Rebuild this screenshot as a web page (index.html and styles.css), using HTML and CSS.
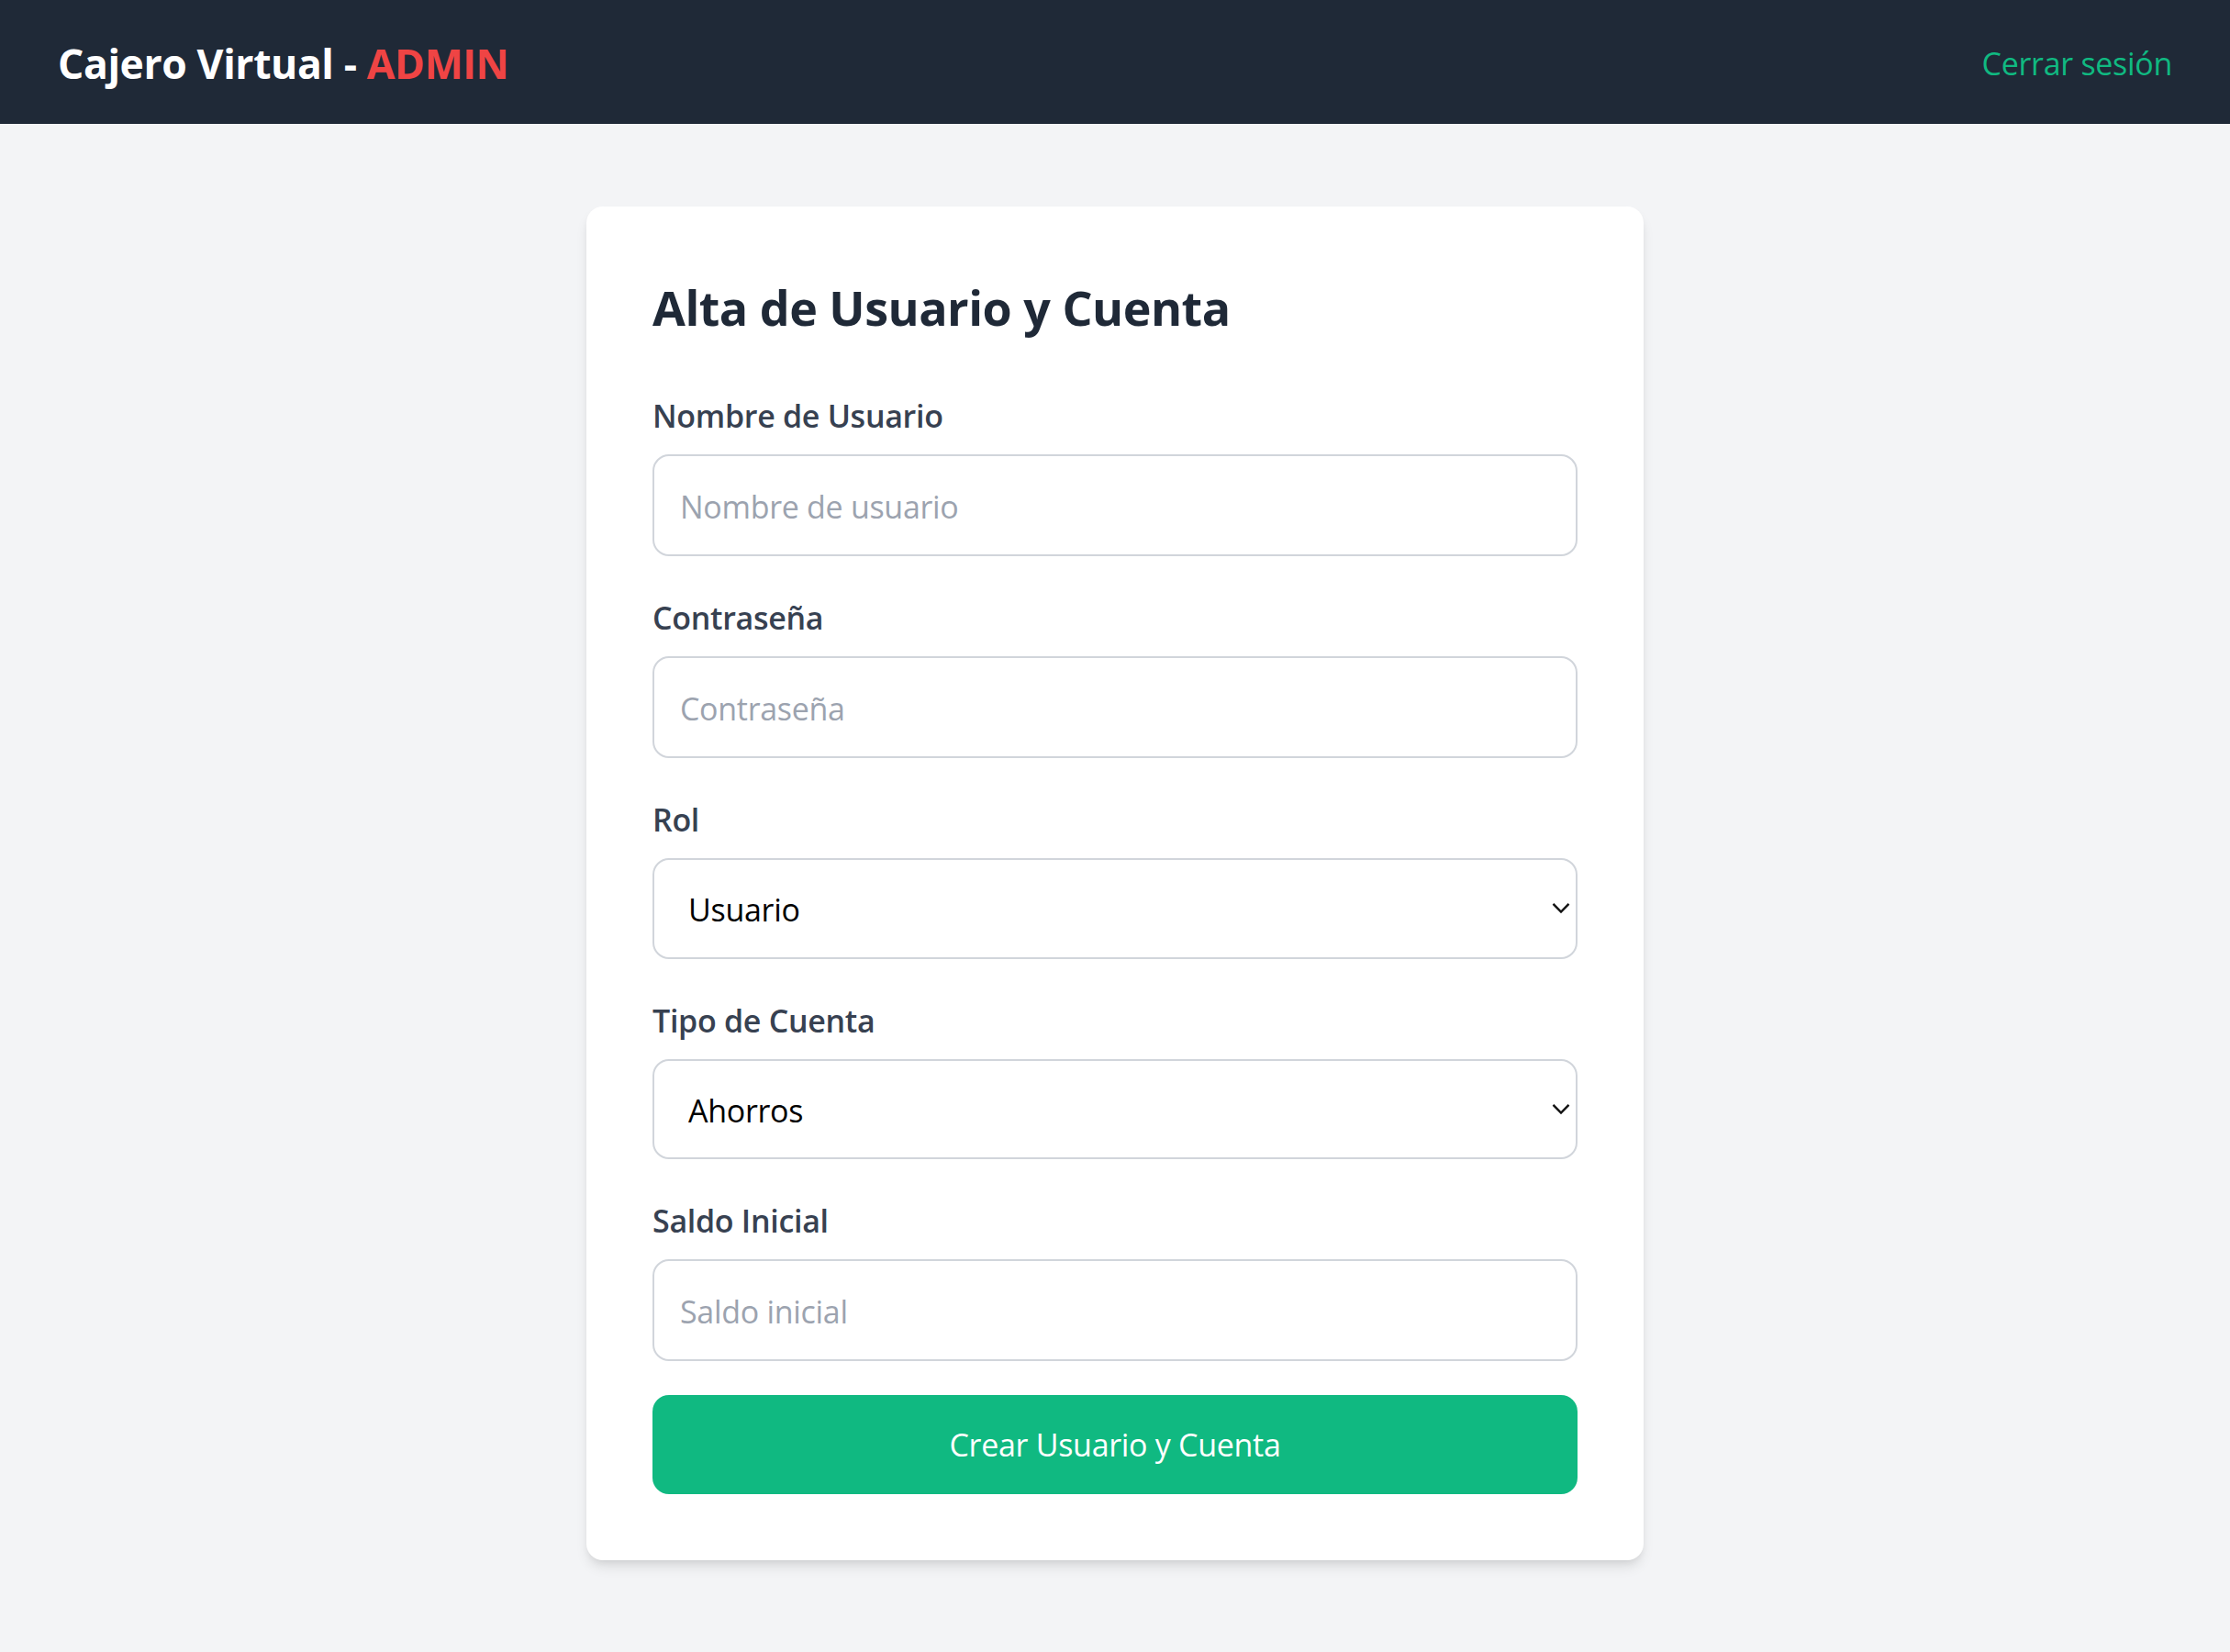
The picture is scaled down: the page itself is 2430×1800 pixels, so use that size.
FILE: index.html
```html
<!DOCTYPE html>
<html lang="es">
<head>
<meta charset="utf-8">
<title>Cajero Virtual - ADMIN</title>
<link rel="stylesheet" href="styles.css">
</head>
<body>
<header class="topbar">
  <h1 class="brand">Cajero Virtual - <span class="brand-admin">ADMIN</span></h1>
  <a class="logout" href="#">Cerrar sesión</a>
</header>
<main class="page">
  <form class="card">
    <h2 class="card-title">Alta de Usuario y Cuenta</h2>
    <div class="field">
      <label class="label">Nombre de Usuario</label>
      <input class="control" type="text" placeholder="Nombre de usuario">
    </div>
    <div class="field">
      <label class="label">Contraseña</label>
      <input class="control" type="password" placeholder="Contraseña">
    </div>
    <div class="field">
      <label class="label">Rol</label>
      <div class="select-wrap">
        <select class="control select">
          <option>Usuario</option>
          <option>Administrador</option>
        </select>
        <svg class="chevron" width="20" height="13" viewBox="0 0 20 13"><path d="M1.5 1.8 L10 10.5 L18.5 1.8" fill="none" stroke="#111" stroke-width="2.4"/></svg>
      </div>
    </div>
    <div class="field">
      <label class="label">Tipo de Cuenta</label>
      <div class="select-wrap">
        <select class="control select">
          <option>Ahorros</option>
          <option>Corriente</option>
        </select>
        <svg class="chevron" width="20" height="13" viewBox="0 0 20 13"><path d="M1.5 1.8 L10 10.5 L18.5 1.8" fill="none" stroke="#111" stroke-width="2.4"/></svg>
      </div>
    </div>
    <div class="field">
      <label class="label">Saldo Inicial</label>
      <input class="control" type="number" placeholder="Saldo inicial">
    </div>
    <button class="submit" type="button">Crear Usuario y Cuenta</button>
  </form>
</main>
</body>
</html>
```

FILE: styles.css
```css
* { box-sizing: border-box; }
html, body { margin: 0; padding: 0; }
body {
  background: #f3f4f6;
  font-family: "Open Sans", "Noto Sans", "Liberation Sans", sans-serif;
  color: #1f2937;
  min-height: 1800px;
}
.topbar {
  height: 135px;
  background: #1f2937;
  display: flex;
  align-items: center;
  justify-content: space-between;
  padding: 0 63px;
}
.brand {
  margin: 0;
  font-size: 44.5px;
  line-height: 63px;
  font-weight: 700;
  color: #ffffff;
  letter-spacing: -0.4px;
  padding-top: 2px;
}
.brand-admin { color: #ef4444; }
.logout {
  color: #10b981;
  font-size: 34px;
  text-decoration: none;
  letter-spacing: -0.3px;
  padding-top: 3px;
}
.page {
  display: flex;
  justify-content: center;
  padding-top: 90px;
}
.card {
  width: 1152px;
  background: #ffffff;
  border-radius: 18px;
  padding: 72px;
  box-shadow: 0 9px 14px -2px rgba(0,0,0,0.1), 0 4px 9px -4px rgba(0,0,0,0.1);
  display: flex;
  flex-direction: column;
}
.card-title {
  margin: 0 0 54px;
  padding-top: 2px;
  height: 72px;
  font-size: 52px;
  line-height: 72px;
  font-weight: 700;
  color: #1f2937;
  letter-spacing: -0.5px;
}
.field {
  display: flex;
  flex-direction: column;
  margin-bottom: 37px;
}
.label {
  font-size: 34px;
  line-height: 54px;
  height: 54px;
  padding-top: 3px;
  font-weight: 600;
  color: #374151;
  margin-bottom: 18px;
  letter-spacing: -0.3px;
}
.control {
  width: 100%;
  height: 111px;
  border: 2px solid #d1d5db;
  border-radius: 18px;
  padding: 3px 28px 0;
  font-family: inherit;
  font-size: 34px;
  color: #111827;
  background: #ffffff;
  outline: none;
  letter-spacing: -0.3px;
}
.control::placeholder { color: #9ca3af; }
.select-wrap { position: relative; }
.select {
  appearance: none;
  -webkit-appearance: none;
  height: 109.5px;
  padding-left: 37px;
  color: #000000;
}
.chevron {
  position: absolute;
  right: 8px;
  top: 48px;
  pointer-events: none;
}
.submit {
  height: 108px;
  border: none;
  border-radius: 18px;
  background: #10b981;
  color: #ffffff;
  font-family: inherit;
  font-size: 34px;
  letter-spacing: -0.3px;
  cursor: pointer;
}
```
